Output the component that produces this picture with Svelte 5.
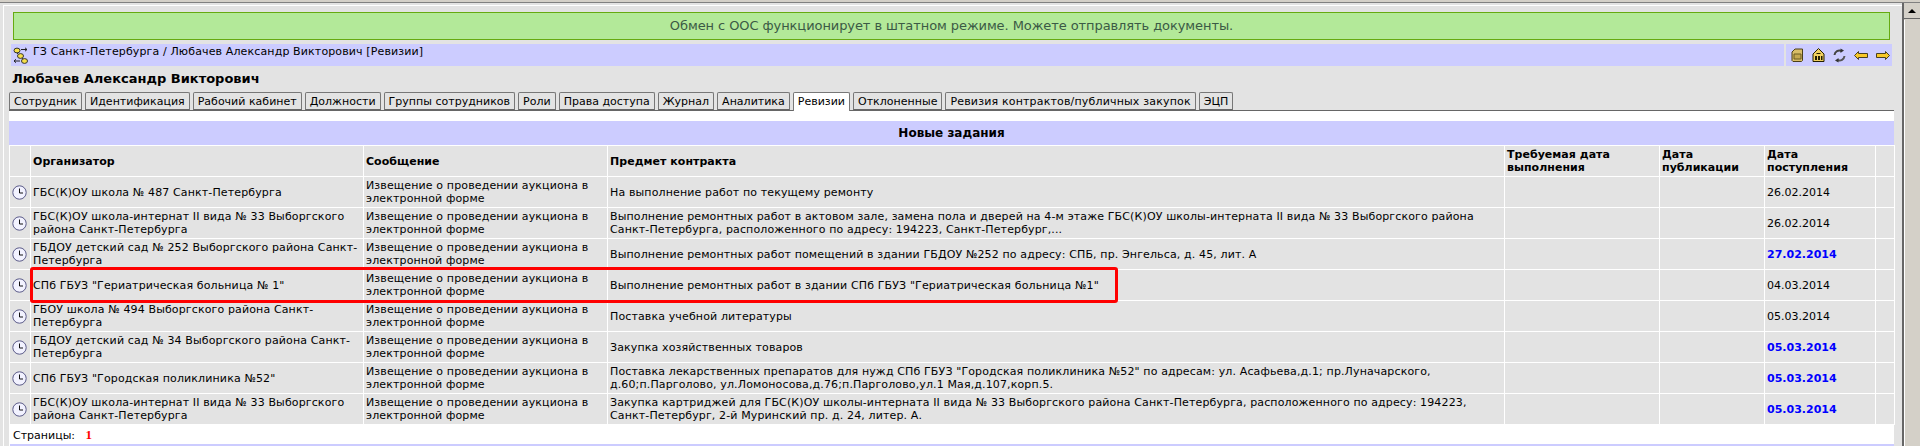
<script>
  const tabs = ['Сотрудник','Идентификация','Рабочий кабинет','Должности','Группы сотрудников','Роли','Права доступа','Журнал','Аналитика','Ревизии','Отклоненные','Ревизия контрактов/публичных закупок','ЭЦП'];
  const msg = ['Извещение о проведении аукциона в','электронной форме'];
  const rows = [
    {org:['ГБС(К)ОУ школа № 487 Санкт-Петербурга'],sub:['На выполнение работ по текущему ремонту'],date:'26.02.2014',isNew:false},
    {org:['ГБС(К)ОУ школа-интернат II вида № 33 Выборгского','района Санкт-Петербурга'],sub:['Выполнение ремонтных работ в актовом зале, замена пола и дверей на 4-м этаже ГБС(К)ОУ школы-интерната II вида № 33 Выборгского района','Санкт-Петербурга, расположенного по адресу: 194223, Санкт-Петербург,...'],date:'26.02.2014',isNew:false},
    {org:['ГБДОУ детский сад № 252 Выборгского района Санкт-','Петербурга'],sub:['Выполнение ремонтных работ помещений в здании ГБДОУ №252 по адресу: СПБ, пр. Энгельса, д. 45, лит. А'],date:'27.02.2014',isNew:true},
    {org:['СПб ГБУЗ "Гериатрическая больница № 1"'],sub:['Выполнение ремонтных работ в здании СПб ГБУЗ "Гериатрическая больница №1"'],date:'04.03.2014',isNew:false},
    {org:['ГБОУ школа № 494 Выборгского района Санкт-','Петербурга'],sub:['Поставка учебной литературы'],date:'05.03.2014',isNew:false},
    {org:['ГБДОУ детский сад № 34 Выборгского района Санкт-','Петербурга'],sub:['Закупка хозяйственных товаров'],date:'05.03.2014',isNew:true},
    {org:['СПб ГБУЗ "Городская поликлиника №52"'],sub:['Поставка лекарственных препаратов для нужд СПб ГБУЗ "Городская поликлиника №52" по адресам: ул. Асафьева,д.1; пр.Луначарского,','д.60;п.Парголово, ул.Ломоносова,д.76;п.Парголово,ул.1 Мая,д.107,корп.5.'],date:'05.03.2014',isNew:true},
    {org:['ГБС(К)ОУ школа-интернат II вида № 33 Выборгского','района Санкт-Петербурга'],sub:['Закупка картриджей для ГБС(К)ОУ школы-интерната II вида № 33 Выборгского района Санкт-Петербурга, расположенного по адресу: 194223,','Санкт-Петербург, 2-й Муринский пр. д. 24, литер. А.'],date:'05.03.2014',isNew:true},
  ];
</script>

{#snippet lines(arr)}
  {#each arr as l, i}{#if i}<br />{/if}{l}{/each}
{/snippet}

<div class="topstrip"></div>
<div class="viewport">
  <div class="main">
    <div class="banner">Обмен с ООС функционирует в штатном режиме. Можете отправлять документы.</div>
    <div class="bars">
      <div class="crumb">
        <svg width="16" height="18" viewBox="0 0 16 18" class="crumb-ic">
          <path d="M3 5l5 5 5 5" stroke="#333" fill="none"/>
          <path d="M8 2.500h6M12 .8l2 1.700-2 1.700M7 14H1M3 12.300L1 14l2 1.700" stroke="#222" fill="none"/>
          <ellipse cx="4" cy="3.500" rx="3" ry="2.400" fill="#f6e04a" stroke="#333"/>
          <ellipse cx="7.500" cy="9" rx="3" ry="2.400" fill="#f6e04a" stroke="#333"/>
          <ellipse cx="11.500" cy="14" rx="3" ry="2.400" fill="#f6e04a" stroke="#333"/>
        </svg>
        <span>ГЗ Санкт-Петербурга / Любачев Александр Викторович [Ревизии]</span>
      </div>
      <div class="tools">
        <svg width="13" height="14" viewBox="0 0 13 14"><path d="M1 4l3-3h7.500v11.500l-1 1H2l-1-1z" fill="#d8bd68" stroke="#4a3f18"/><path d="M3 6h7v5H3z" fill="#c4a850" stroke="#6a5a20"/></svg>
        <svg width="13" height="14" viewBox="0 0 13 14"><path d="M6.500.5L12 6v7.500H1V6z" fill="#f0d060" stroke="#221c00"/><path d="M3 8h2v4H3zM6 8h2v4H6zM9 8h1.500v4H9z" fill="#221c00"/><path d="M4.500 5.500h4" stroke="#221c00"/></svg>
        <svg width="13" height="15" viewBox="0 0 13 15"><path d="M1.500 7a5 5 0 0 1 7-4" fill="none" stroke="#444" stroke-width="2"/><path d="M7.500.5l3.500 2-3.500 2.500z" fill="#333"/><path d="M11.500 8a5 5 0 0 1-7 4" fill="none" stroke="#555" stroke-width="2"/><path d="M5.500 14.500L2 12.500 5.500 10z" fill="#333"/></svg>
        <svg width="14" height="9" viewBox="0 0 14 9"><path d="M.5 4.500l4-4v2h9v4h-9v2z" fill="#f8c828" stroke="#4a4020"/></svg>
        <svg width="14" height="9" viewBox="0 0 14 9"><path d="M13.500 4.500l-4-4v2h-9v4h9v2z" fill="#f8c828" stroke="#4a4020"/></svg>
      </div>
    </div>
    <h1>Любачев Александр Викторович</h1>
    <div class="tabs">
      {#each tabs as t}
        <div class="tab" class:active={t === 'Ревизии'} class:long={t.length > 30}>{t}</div>
      {/each}
    </div>
    <div class="panel">
      <div class="title">Новые задания</div>
      <table>
        <colgroup>
          <col style="width:20px" /><col style="width:332px" /><col style="width:243px" /><col style="width:896px" />
          <col style="width:154px" /><col style="width:104px" /><col style="width:110px" /><col style="width:18px" />
        </colgroup>
        <thead>
          <tr>
            <th></th><th>Организатор</th><th>Сообщение</th><th>Предмет контракта</th>
            <th>Требуемая дата<br />выполнения</th><th>Дата<br />публикации</th><th>Дата<br />поступления</th><th></th>
          </tr>
        </thead>
        <tbody>
          {#each rows as r}
            <tr>
              <td class="ic">
                <svg width="15" height="15" viewBox="0 0 15 15">
                  <circle cx="7.500" cy="7.500" r="6.700" fill="#f2f2ff" stroke="#5a5a88" />
                  <path d="M7.500 3.500v4.500H11" fill="none" stroke="#111" />
                </svg>
              </td>
              <td>{@render lines(r.org)}</td>
              <td>{@render lines(msg)}</td>
              <td>{@render lines(r.sub)}</td>
              <td></td><td></td>
              <td class="date" class:newd={r.isNew}>{r.date}</td>
              <td></td>
            </tr>
          {/each}
        </tbody>
      </table>
      <div class="highlight"></div>
      <div class="pages">Страницы: <b>1</b></div>
      <div class="foot"></div>
    </div>
  </div>
  <div class="scroll">
    <div class="sb-btn"><span class="arrow"></span></div>
    <div class="sb-thumb"></div>
  </div>
</div>

<style>
  :global(html), :global(body) { margin: 0; height: 446px; overflow: hidden; background: #e3e3e3; }
  :global(body) { font-family: "DejaVu Sans", Verdana, sans-serif; font-size: 11px; color: #000; }
  .topstrip { height: 2px; background: #d4d0c8; border-bottom: 1px solid #808080; }
  .viewport { display: flex; height: 443px; }
  .main { flex: 1; margin: 2px 0 0 3px; border-top: 1px solid #fff; border-left: 1px solid #fff; padding: 6px 8px 0 5px; min-width: 0; }
  .banner { height: 26px; line-height: 26px; margin: 0 4px; background: #b3e999; border: 1px solid #66aa11; text-align: center; color: #3b5a45; font-size: 13px; letter-spacing: -0.08px; }
  .bars { display: flex; gap: 2px; margin: 4px 2px 0; height: 22px; }
  .crumb { flex: 1; background: #ccccff; display: flex; align-items: flex-start; line-height: 16px; letter-spacing: 0.13px; }
  .crumb-ic { margin: 3px 4px 0 2px; flex: none; }
  .tools { width: 106px; background: #ccccff; display: flex; align-items: center; gap: 8px; padding-left: 5px; box-sizing: border-box; }
  h1 { margin: 5px 0 0 3px; font-size: 13px; line-height: 16px; font-weight: bold; height: 21px; }
  .tabs { display: flex; gap: 3px; height: 18px; border-bottom: 1px solid #666; }
  .tab { height: 18px; box-sizing: border-box; padding: 0 4px; border: 1px solid #777; border-bottom-color: #666; border-radius: 2px 2px 0 0; white-space: nowrap; line-height: 17px; letter-spacing: 0.01px; }
  .tab.long { letter-spacing: 0.17px; }
  .tab.active { background: #fff; border-bottom: 0; height: 19px; }
  .panel { position: relative; background: #fff; padding-top: 10px; }
  .title { height: 24px; line-height: 24px; background: #ccccff; text-align: center; font-weight: bold; font-size: 12px; }
  table { table-layout: fixed; width: 1886px; border-collapse: separate; border-spacing: 1px; background: #fff; }
  th, td { height: 30px; padding: 0 3px 0 2px; box-sizing: border-box; background: #e3e3e3; text-align: left; vertical-align: middle; line-height: 13px; white-space: nowrap; overflow: hidden; }
  th { font-weight: bold; letter-spacing: 0.03px; }
  td { letter-spacing: 0.13px; }
  td.date { letter-spacing: 0; }
  td.ic { padding: 0 0 0 2px; }
  td.ic svg { display: block; }
  td.newd { color: #0000ff; font-weight: bold; }
  .highlight { position: absolute; left: 21px; top: 156px; width: 1082px; height: 30px; border: 3px solid #ff0000; border-radius: 3px; }
  .pages { height: 19px; line-height: 19px; padding-left: 4px; }
  .pages b { color: #ff0000; font-family: "Liberation Serif", serif; font-size: 13px; margin-left: 7px; }
  .foot { height: 2px; background: #ccccff; margin-left: 1px; }
  .scroll { width: 16px; flex: none; border-left: 2px solid #666; background: #d4d0c8; }
  .sb-btn { height: 14px; margin-top: 1px; display: flex; align-items: center; justify-content: center; border-bottom: 1px solid #666; background: #d4d0c8; }
  .arrow { width: 0; height: 0; border-left: 4px solid transparent; border-right: 4px solid transparent; border-bottom: 4px solid #000; }
  .sb-thumb { height: 100%; border-left: 1px solid #fff; margin-top: 1px; }
</style>
